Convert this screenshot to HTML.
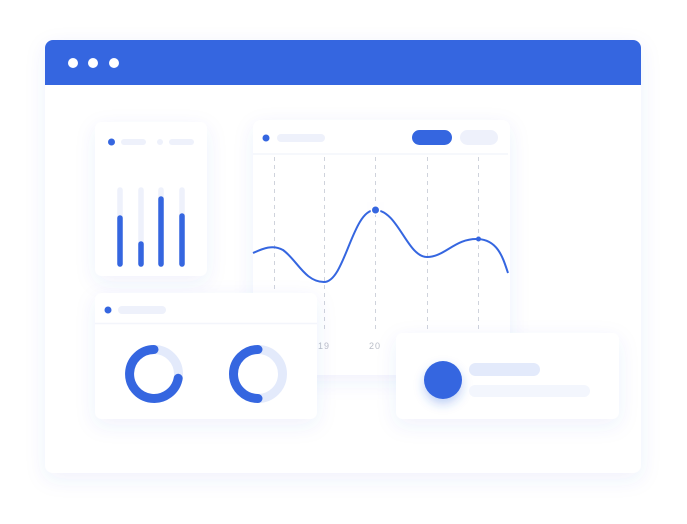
<!DOCTYPE html>
<html><head><meta charset="utf-8"><style>
html,body{margin:0;padding:0;background:#fff;width:687px;height:524px;overflow:hidden;font-family:"Liberation Sans",sans-serif}
</style></head><body>
<svg width="687" height="524" viewBox="0 0 687 524" xmlns="http://www.w3.org/2000/svg">
<defs>
<filter id="sh" x="-30%" y="-30%" width="160%" height="160%"><feDropShadow dx="0" dy="6" stdDeviation="10" flood-color="#3a5fd0" flood-opacity="0.08"/></filter>
<filter id="sh2" x="-50%" y="-50%" width="200%" height="200%"><feDropShadow dx="0" dy="5" stdDeviation="5" flood-color="#3366e0" flood-opacity="0.3"/></filter>
<clipPath id="win"><rect x="45" y="40" width="596" height="433" rx="8"/></clipPath>
</defs>
<rect x="45" y="40" width="596" height="433" rx="8" fill="#fff" filter="url(#sh)"/>
<g clip-path="url(#win)"><rect x="45" y="40" width="596" height="45" fill="#3566e0"/></g>
<circle cx="73" cy="63" r="5" fill="#fff"/><circle cx="93" cy="63" r="5" fill="#fff"/><circle cx="114" cy="63" r="5" fill="#fff"/>

<!-- line card -->
<rect x="253" y="120" width="257" height="255" rx="8" fill="#fff" filter="url(#sh)"/>
<circle cx="266" cy="138" r="3.5" fill="#3566e0"/>
<rect x="277" y="134" width="48" height="8" rx="4" fill="#eef1fb"/>
<rect x="412" y="130" width="40" height="15" rx="7.5" fill="#3566e0"/>
<rect x="460" y="130" width="38" height="15" rx="7.5" fill="#eef1fb"/>
<line x1="253" y1="154" x2="508" y2="154" stroke="#f3f5fb" stroke-width="1.5"/>
<g stroke="#cfd3dc" stroke-width="1" stroke-dasharray="4 4">
<line x1="274.5" y1="157" x2="274.5" y2="330"/><line x1="324.5" y1="157" x2="324.5" y2="330"/><line x1="375.5" y1="157" x2="375.5" y2="330"/><line x1="427.5" y1="157" x2="427.5" y2="330"/><line x1="478.5" y1="157" x2="478.5" y2="330"/>
</g>
<path d="M253 253 C262 249 272 244 283 250 C297 260 305 282 324 282 C345 282 352 210 375 210 C398 210 407 257 427 257 C445 257 455 238 478 239 C498 240 503 258 508 273" fill="none" stroke="#3566e0" stroke-width="2"/>
<circle cx="375.5" cy="210" r="5" fill="#fff" filter="url(#sh)"/>
<circle cx="375.5" cy="210" r="3.5" fill="#3566e0"/>
<circle cx="478.5" cy="239" r="2.5" fill="#3566e0"/>
<text x="324" y="349" font-size="9" fill="#b9bdc7" text-anchor="middle" letter-spacing="1">19</text>
<text x="375" y="349" font-size="9" fill="#b9bdc7" text-anchor="middle" letter-spacing="1">20</text>

<!-- bar card -->
<rect x="95" y="122" width="112" height="154" rx="7" fill="#fff" filter="url(#sh)"/>
<circle cx="111.5" cy="142" r="3.5" fill="#3566e0"/>
<rect x="121" y="139" width="25" height="6" rx="3" fill="#eef1fb"/>
<circle cx="160" cy="142" r="3" fill="#eef1fb"/>
<rect x="169" y="139" width="25" height="6" rx="3" fill="#eef1fb"/>
<g stroke-linecap="round" stroke-width="5.5">
<line x1="120" y1="190" x2="120" y2="264" stroke="#eef1fb"/><line x1="120" y1="218" x2="120" y2="264" stroke="#3566e0"/>
<line x1="141" y1="190" x2="141" y2="264" stroke="#eef1fb"/><line x1="141" y1="244" x2="141" y2="264" stroke="#3566e0"/>
<line x1="161" y1="190" x2="161" y2="264" stroke="#eef1fb"/><line x1="161" y1="199" x2="161" y2="264" stroke="#3566e0"/>
<line x1="182" y1="190" x2="182" y2="264" stroke="#eef1fb"/><line x1="182" y1="216" x2="182" y2="264" stroke="#3566e0"/>
</g>

<!-- donut card -->
<rect x="95" y="293" width="222" height="126" rx="7" fill="#fff" filter="url(#sh)"/>
<circle cx="108" cy="310" r="3.5" fill="#3566e0"/>
<rect x="118" y="306" width="48" height="8" rx="4" fill="#eef1fb"/>
<line x1="95" y1="323.5" x2="317" y2="323.5" stroke="#f3f5fb" stroke-width="1.5"/>
<circle cx="154" cy="374" r="24.5" fill="none" stroke="#e3eafb" stroke-width="9"/>
<path d="M178.2 378.3 A24.5 24.5 0 1 1 154 349.5" fill="none" stroke="#3566e0" stroke-width="9" stroke-linecap="round"/>
<circle cx="258" cy="374" r="24.5" fill="none" stroke="#e3eafb" stroke-width="9"/>
<path d="M258 349.5 A24.5 24.5 0 0 0 258 398.5" fill="none" stroke="#3566e0" stroke-width="9" stroke-linecap="round"/>

<!-- profile card -->
<rect x="396" y="333" width="223" height="86" rx="7" fill="#fff" filter="url(#sh)"/>
<circle cx="443" cy="380" r="19" fill="#3566e0" filter="url(#sh2)"/>
<rect x="469" y="363" width="71" height="13" rx="6.5" fill="#e3eafb"/>
<rect x="469" y="385" width="121" height="12" rx="6" fill="#f3f6fd"/>
</svg>
</body></html>
